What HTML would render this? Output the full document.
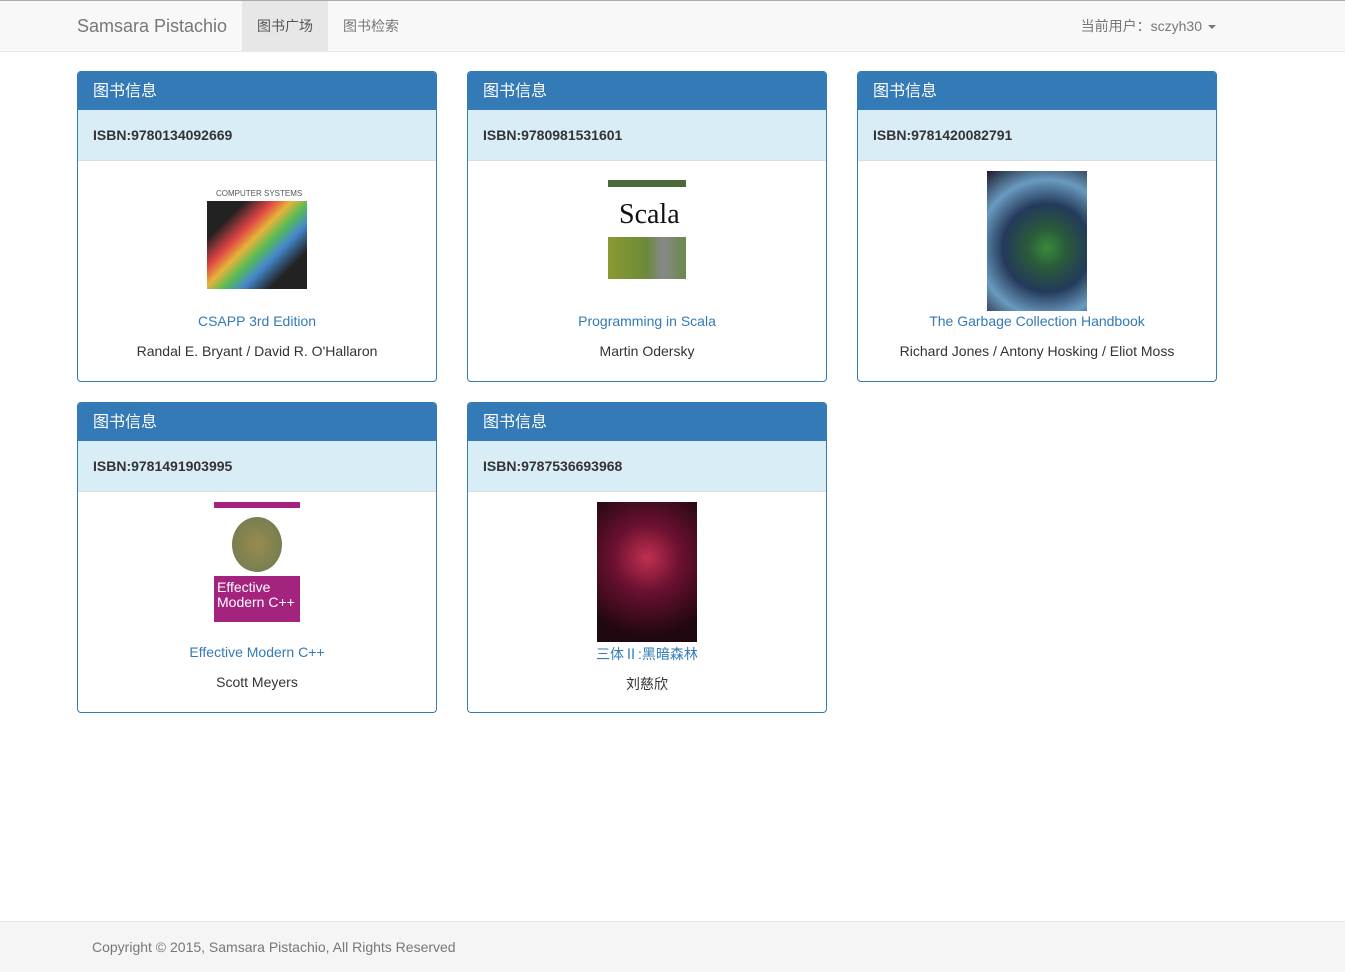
<!DOCTYPE html>
<html><head><meta charset="utf-8"><style>
*{box-sizing:border-box;margin:0;padding:0}
body{width:1345px;height:972px;position:relative;background:#fff;font-family:"Liberation Sans","Noto Sans CJK SC",sans-serif;font-size:14px;color:#333;overflow:hidden}
.nav{position:absolute;left:0;top:0;width:1345px;height:52px;background:#f8f8f8;border-top:1px solid #aaa;border-bottom:1px solid #e7e7e7}
.brand{position:absolute;left:77px;top:15px;font-size:18px;color:#777}
.tab{position:absolute;top:0;height:50px;line-height:50px;padding:0 15px;color:#777;font-size:14px}
.tab.act{background:#e7e7e7;color:#555}
.user{position:absolute;right:129px;top:0;line-height:50px;color:#777}
.caret{display:inline-block;width:0;height:0;border-left:4px solid transparent;border-right:4px solid transparent;border-top:4px solid #777;vertical-align:middle;margin-left:6px}
.panel{position:absolute;width:360px;height:311px;border:1px solid #337ab7;border-radius:4px;overflow:hidden}
.ph{background:#337ab7;color:#fff;height:38px;line-height:39px;padding-left:15px;font-size:16px}
.isbn{background:#d9edf7;height:51px;line-height:50px;padding-left:15px;font-weight:bold;border-bottom:1px solid #ddd}
.img{position:absolute;left:129px;top:99px;width:100px;height:140px;overflow:hidden}
.t{position:absolute;top:241px;width:100%;text-align:center;color:#337ab7}
.a{position:absolute;top:271px;width:100%;text-align:center}
.foot{position:absolute;left:0;top:921px;width:1345px;height:51px;background:#f5f5f5;border-top:1px solid #e5e5e5;color:#777;padding:17px 0 0 92px}
</style></head><body>
<div class="nav">
<div class="brand">Samsara Pistachio</div>
<div class="tab act" style="left:242px">图书广场</div>
<div class="tab" style="left:328px">图书检索</div>
<div class="user">当前用户：sczyh30<span class="caret"></span></div>
</div>

<div class="panel" style="left:77px;top:71px">
<div class="ph">图书信息</div><div class="isbn">ISBN:9780134092669</div>
<div class="img" style="background:#fff"><div style="position:absolute;top:18px;left:9px;font-size:8px;color:#555">COMPUTER SYSTEMS</div><div style="position:absolute;top:30px;left:0;width:100px;height:88px;background:linear-gradient(135deg,#222 20%,#d44 35%,#e9b33a 45%,#5b5 55%,#48c 65%,#222 80%)"></div></div>
<div class="t">CSAPP 3rd Edition</div><div class="a">Randal E. Bryant / David R. O'Hallaron</div>
</div>

<div class="panel" style="left:467px;top:71px">
<div class="ph">图书信息</div><div class="isbn">ISBN:9780981531601</div>
<div class="img" style="background:#fff"><div style="position:absolute;top:9px;left:11px;width:78px;height:7px;background:#4a6a3a"></div><div style="position:absolute;top:28px;left:22px;font-family:'Liberation Serif',serif;font-size:28px;color:#111">Scala</div><div style="position:absolute;top:66px;left:11px;width:78px;height:42px;background:linear-gradient(90deg,#8a9a30,#6a8a3a 50%,#888 70%,#6a8a4a)"></div></div>
<div class="t">Programming in Scala</div><div class="a">Martin Odersky</div>
</div>

<div class="panel" style="left:857px;top:71px">
<div class="ph">图书信息</div><div class="isbn">ISBN:9781420082791</div>
<div class="img" style="background:radial-gradient(circle at 60% 55%,#3a8a3a 0,#2a5a3a 20%,#243a5a 45%,#6a9ac0 70%,#1a1a2a 100%)"></div>
<div class="t">The Garbage Collection Handbook</div><div class="a">Richard Jones / Antony Hosking / Eliot Moss</div>
</div>

<div class="panel" style="left:77px;top:402px">
<div class="ph">图书信息</div><div class="isbn">ISBN:9781491903995</div>
<div class="img" style="background:#fff"><div style="position:absolute;top:0;left:7px;width:86px;height:6px;background:#a3237e"></div><div style="position:absolute;top:15px;left:25px;width:50px;height:55px;border-radius:50%;background:radial-gradient(#9a8a50,#6a7a50)"></div><div style="position:absolute;top:74px;left:7px;width:86px;height:46px;background:#a3237e;color:#fff;font-size:14px;line-height:15px;padding:4px 3px;white-space:nowrap">Effective<br>Modern C++</div></div>
<div class="t">Effective Modern C++</div><div class="a">Scott Meyers</div>
</div>

<div class="panel" style="left:467px;top:402px">
<div class="ph">图书信息</div><div class="isbn">ISBN:9787536693968</div>
<div class="img" style="background:radial-gradient(circle at 50% 40%,#c03050 0,#6a1030 35%,#200810 80%)"></div>
<div class="t">三体Ⅱ:黑暗森林</div><div class="a">刘慈欣</div>
</div>

<div class="foot">Copyright © 2015, Samsara Pistachio, All Rights Reserved</div>
</body></html>
